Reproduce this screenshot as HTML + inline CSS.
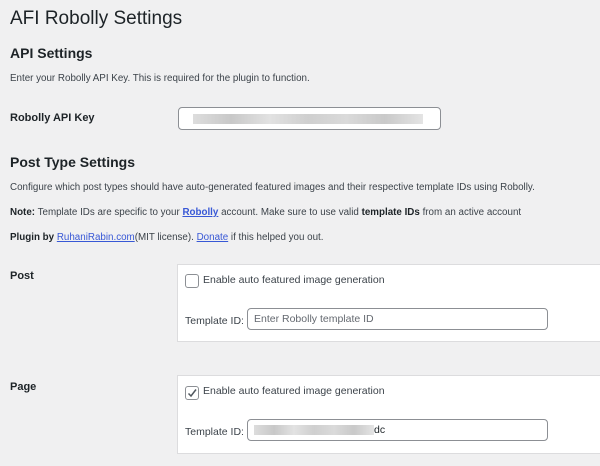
<!DOCTYPE html>
<html><head><style>
body{margin:0;width:600px;height:466px;background:#f0f0f1;font-family:"Liberation Sans",sans-serif;color:#3c434a;position:relative;overflow:hidden}
.a{position:absolute;white-space:nowrap}
.h1{font-size:19px;color:#1d2327;left:10px;top:8px}
.h2{font-size:14px;font-weight:bold;color:#1d2327}
.p{font-size:9.8px}
.lb{font-size:11px;font-weight:bold;color:#1d2327}
a{color:#3858d6;text-decoration:underline}
.box{position:absolute;left:177px;right:-2px;background:#fff;border:1px solid #dcdcde}
.inp{position:absolute;background:#fff;border:1px solid #8c8f94;border-radius:4px}
.cb{position:absolute;width:12px;height:12px;border:1px solid #8c8f94;border-radius:3px;background:#fff}
.ft{font-size:10.5px}
.blur{position:absolute;height:10px;background:linear-gradient(90deg,#ddd,#c8c8c8,#e2e2e2,#cfcfcf,#dadada,#c9c9c9,#e4e4e4)}
</style></head><body>
<div class="a h1">AFI Robolly Settings</div>
<div class="a h2" style="left:10px;top:45px">API Settings</div>
<div class="a p" style="left:10px;top:73px">Enter your Robolly API Key. This is required for the plugin to function.</div>
<div class="a lb" style="left:10px;top:112px">Robolly API Key</div>
<div class="inp" style="left:178px;top:107px;width:261px;height:21px"><div class="blur" style="left:14px;top:6px;width:230px"></div></div>
<div class="a h2" style="left:10px;top:154px">Post Type Settings</div>
<div class="a p" style="left:10px;top:182px">Configure which post types should have auto-generated featured images and their respective template IDs using Robolly.</div>
<div class="a p" style="left:10px;top:207px"><b style="color:#1d2327">Note:</b> Template IDs are specific to your <a><b>Robolly</b></a> account. Make sure to use valid <b style="color:#1d2327">template IDs</b> from an active account</div>
<div class="a p" style="left:10px;top:232px"><b style="color:#1d2327">Plugin by</b> <a>RuhaniRabin.com</a>(MIT license). <a>Donate</a> if this helped you out.</div>

<div class="a lb" style="left:10px;top:270px">Post</div>
<div class="box" style="top:264px;height:76px"></div>
<div class="cb" style="left:185px;top:274px"></div>
<div class="a ft" style="left:203px;top:274px">Enable auto featured image generation</div>
<div class="a ft" style="left:185px;top:315px">Template ID:</div>
<div class="inp" style="left:247px;top:308px;width:299px;height:20px"><span class="a ft" style="left:6px;top:4px;color:#646970">Enter Robolly template ID</span></div>

<div class="a lb" style="left:10px;top:381px">Page</div>
<div class="box" style="top:375px;height:77px"></div>
<div class="cb" style="left:185px;top:386px"><svg width="12" height="12" style="position:absolute;left:0;top:0"><path d="M2.5 6.5 L5 9 L10 2.5" stroke="#50575e" stroke-width="1.5" fill="none"/></svg></div>
<div class="a ft" style="left:203px;top:385px">Enable auto featured image generation</div>
<div class="a ft" style="left:185px;top:426px">Template ID:</div>
<div class="inp" style="left:247px;top:419px;width:299px;height:20px"><div class="blur" style="left:6px;top:5px;width:120px"></div><span class="a ft" style="left:126px;top:4px;color:#1d2327">dc</span></div>
</body></html>
